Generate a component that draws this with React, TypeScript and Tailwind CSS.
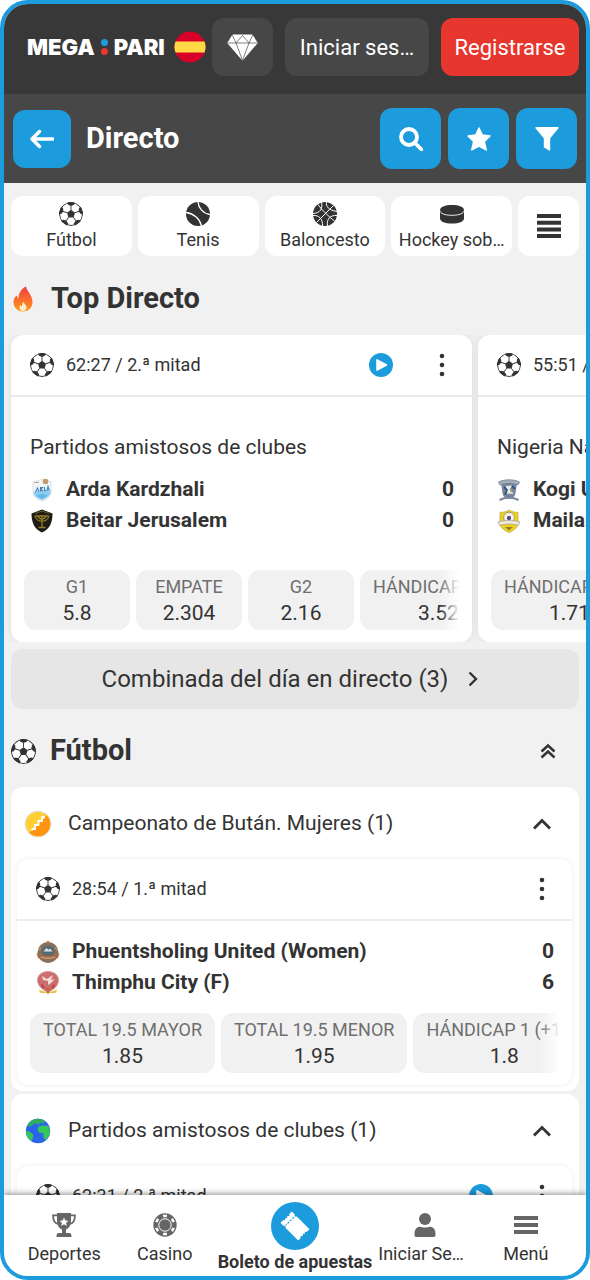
import React from "react";

type Crest = "arda" | "beitar" | "kogi" | "mailantarki" | "phuentsholing" | "thimphu";

interface Team {
  name: string;
  crest: Crest;
  score?: number;
}

interface Odd {
  label: string;
  value: string;
}

interface Match {
  time: string;
  league?: string;
  live?: boolean;
  teams: Team[];
  odds: Odd[];
}

const topMatches: Match[] = [
  {
    time: "62:27 / 2.ª mitad",
    league: "Partidos amistosos de clubes",
    live: true,
    teams: [
      { name: "Arda Kardzhali", crest: "arda", score: 0 },
      { name: "Beitar Jerusalem", crest: "beitar", score: 0 },
    ],
    odds: [
      { label: "G1", value: "5.8" },
      { label: "EMPATE", value: "2.304" },
      { label: "G2", value: "2.16" },
      { label: "HÁNDICAP 1 (0)", value: "3.52" },
    ],
  },
  {
    time: "55:51 / 2.ª mitad",
    league: "Nigeria National League",
    teams: [
      { name: "Kogi United", crest: "kogi" },
      { name: "Mailantarki Care", crest: "mailantarki" },
    ],
    odds: [{ label: "HÁNDICAP 1 (0)", value: "1.71" }],
  },
];

const butanMatch: Match = {
  time: "28:54 / 1.ª mitad",
  teams: [
    { name: "Phuentsholing United (Women)", crest: "phuentsholing", score: 0 },
    { name: "Thimphu City (F)", crest: "thimphu", score: 6 },
  ],
  odds: [
    { label: "TOTAL 19.5 MAYOR", value: "1.85" },
    { label: "TOTAL 19.5 MENOR", value: "1.95" },
    { label: "HÁNDICAP 1 (+1.5)", value: "1.8" },
  ],
};

const friendlyMatch: Match = {
  time: "62:31 / 2.ª mitad",
  live: true,
  teams: [],
  odds: [],
};

/* ---------- icons ---------- */

function SoccerBall({ className = "size-6" }: { className?: string }) {
  return (
    <svg viewBox="0 0 24 24" className={`${className} shrink-0 overflow-hidden rounded-full`} aria-hidden="true">
      <circle cx="12" cy="12" r="11.5" fill="#fff" />
      <path d="M12 7.8 16 10.7 14.5 15.4H9.5L8 10.7Z" fill="#333" />
      {[0, 72, 144, 216, 288].map((a) => (
        <g key={a} transform={`rotate(${a} 12 12)`}>
          <path d="M12 8V3.500" stroke="#333" strokeWidth="0.9" />
          <path d="M12 3.900 9 2.700 7.800 0H16.200L15 2.700Z" fill="#333" />
        </g>
      ))}
      <circle cx="12" cy="12" r="11.5" fill="none" stroke="#333" strokeWidth="1" />
    </svg>
  );
}

function TennisBall() {
  return (
    <svg viewBox="0 0 24 24" className="size-6 shrink-0" aria-hidden="true">
      <circle cx="12" cy="12" r="12" fill="#333" />
      <path d="M12 0C12.5 6 17 11.5 24 12.5M0 10.5C8 11.5 14 17 15.5 24" fill="none" stroke="#fff" strokeWidth="1.3" />
    </svg>
  );
}

function Basketball() {
  return (
    <svg viewBox="0 0 24 24" className="size-6 shrink-0" aria-hidden="true">
      <circle cx="12" cy="12" r="12" fill="#333" />
      <path
        d="M20.5 3.5 3.5 20.5M5 2.5C8 7 15 14 21.5 19M13.5 0C13 4.5 15 8 24 9.5M0 13.5C6 13 10 17 9.5 24M8.5 0C10 7 7 11 0 11.5M24 13.5C17 13 13.5 17 14.5 24"
        fill="none"
        stroke="#fff"
        strokeWidth="1"
      />
    </svg>
  );
}

function Puck() {
  return (
    <svg viewBox="0 0 24 24" className="size-6 shrink-0" aria-hidden="true">
      <path d="M0 8C0 5 5 3 12 3S24 5 24 8V16.500C24 19.500 19 21.500 12 21.500S0 19.500 0 16.500Z" fill="#333" />
      <path d="M0 8.500C0 11.500 5 13.300 12 13.300S24 11.500 24 8.500" fill="none" stroke="#fff" strokeWidth="0.9" />
    </svg>
  );
}

function Flame() {
  return (
    <svg viewBox="0 0 20 26" className="h-[26px] w-5" aria-hidden="true">
      <defs>
        <linearGradient id="flame" x1="0" y1="0" x2="0" y2="1">
          <stop offset="0" stopColor="#ee3f3f" />
          <stop offset="0.5" stopColor="#fb6a2c" />
          <stop offset="1" stopColor="#ff9a1c" />
        </linearGradient>
      </defs>
      <path
        d="M13 0.500C13.500 5 19.500 9 19.500 16C19.500 21.500 15.500 25.500 10 25.500S0.500 21.500 0.500 16C0.500 13 2 10.500 4 9.500C4 11 4.500 12 5.500 12.500C5.500 7 8.500 2.500 13 0.500Z"
        fill="url(#flame)"
      />
      <path d="M10.500 16C11 18 14 19 13.500 22C13.200 24 12 25 10 25S6.500 23.800 6.500 21.800C6.500 20.500 7 19.500 7.700 19C8 20 8.500 20.300 9 20.300C8.700 18.500 9.300 17 10.500 16Z" fill="#ffeccb" />
    </svg>
  );
}

function Diamond() {
  return (
    <svg viewBox="0 0 31 27" className="h-[27px] w-[31px]" aria-hidden="true">
      <path d="M5.500 0.500H25.500L30.800 9 15.500 26.800 0.200 9Z" fill="#fff" />
      <path
        d="M0.500 9H30.500M9 9 15.500 26.500 22 9M9 9 5 0.500M22 9 26 0.500M9 9 15.500 1.500 22 9"
        fill="none"
        stroke="#474747"
        strokeWidth="0.7"
      />
    </svg>
  );
}

function SpainFlag() {
  return (
    <svg viewBox="0 0 32 32" className="size-8 overflow-hidden rounded-full" aria-hidden="true">
      <circle cx="16" cy="16" r="15.500" fill="#d80027" />
      <path d="M1.500 10.500H30.500C32 14 32 18 30.500 21.500H1.500C0 18 0 14 1.500 10.500Z" fill="#ffda44" />
    </svg>
  );
}

function PlayIcon() {
  return (
    <svg viewBox="0 0 24 24" className="size-6" aria-hidden="true">
      <circle cx="12" cy="12" r="12" fill="#1c9cdc" />
      <path d="M8 6.800 17.500 12 8 17.200Z" fill="#fff" stroke="#fff" strokeWidth="1.500" strokeLinejoin="round" />
    </svg>
  );
}

function DotsIcon() {
  return (
    <svg viewBox="0 0 6 24" className="h-6 w-1.5" aria-hidden="true">
      <circle cx="3" cy="3" r="2.300" fill="#333" />
      <circle cx="3" cy="12" r="2.300" fill="#333" />
      <circle cx="3" cy="21" r="2.300" fill="#333" />
    </svg>
  );
}

function ChevronUp() {
  return (
    <svg viewBox="0 0 20 12" className="h-3 w-5" aria-hidden="true">
      <path d="M2 10.500 10 2.500 18 10.500" fill="none" stroke="#333" strokeWidth="2.800" />
    </svg>
  );
}

function SearchIcon() {
  return (
    <svg viewBox="0 0 24 24" className="size-6" aria-hidden="true">
      <circle cx="10" cy="10" r="8" fill="none" stroke="#fff" strokeWidth="3.800" />
      <path d="M15.500 15.500 22.500 22.500" stroke="#fff" strokeWidth="3.800" strokeLinecap="round" />
    </svg>
  );
}

function StarIcon() {
  return (
    <svg viewBox="0 0 24 24" className="size-6" aria-hidden="true">
      <path
        d="M12 1 15.300 8 23 9 17.300 14.400 19.200 22.900 12 19 4.800 22.900 6.700 14.400 1 9 8.700 8Z"
        fill="#fff"
        stroke="#fff"
        strokeWidth="1.500"
        strokeLinejoin="round"
      />
    </svg>
  );
}

function FunnelIcon() {
  return (
    <svg viewBox="0 0 24 24" className="size-6" aria-hidden="true">
      <path d="M1 0.800H23L14.500 11V23L9.500 20V11Z" fill="#fff" stroke="#fff" strokeWidth="1.400" strokeLinejoin="round" />
    </svg>
  );
}

function BackIcon() {
  return (
    <svg viewBox="0 0 24 20" className="h-5 w-6" aria-hidden="true">
      <path d="M23 10H2M9.500 2.500 2 10 9.500 17.500" fill="none" stroke="#fff" strokeWidth="3.400" strokeLinecap="round" strokeLinejoin="round" />
    </svg>
  );
}

function TrophyIcon() {
  return (
    <svg viewBox="0 0 24 24" className="size-6" aria-hidden="true">
      <path d="M5 0H19V8C19 12.500 16.500 15.500 14 16.500V20H17.500C18.800 20 19.500 21 19.500 24H4.500C4.500 21 5.200 20 6.500 20H10V16.500C7.500 15.500 5 12.500 5 8Z" fill="#666" />
      <path d="M5.500 2.300H1C1 7 2.800 10.500 6.500 11M18.500 2.300H23C23 7 21.200 10.500 17.500 11" fill="none" stroke="#666" strokeWidth="1.700" />
      <path d="M12 4.500 13.300 7.600 16.500 7.800 14 9.900 14.800 13 12 11.300 9.200 13 10 9.900 7.500 7.800 10.700 7.600Z" fill="#fff" />
    </svg>
  );
}

function ChipIcon() {
  return (
    <svg viewBox="0 0 24 24" className="size-6" aria-hidden="true">
      <circle cx="12" cy="12" r="11.700" fill="#666" />
      <circle cx="12" cy="12" r="6.200" fill="none" stroke="#fff" strokeWidth="1" />
      {[0, 60, 120, 180, 240, 300].map((a) => (
        <path key={a} d="M9.900 1.700H14.100L13.700 4.200H10.300Z" fill="#fff" transform={`rotate(${a} 12 12)`} />
      ))}
    </svg>
  );
}

function TicketIcon() {
  return (
    <svg viewBox="0 0 32 32" className="size-8" aria-hidden="true">
      <g transform="rotate(45 16 16)">
        <path
          d="M3.500 8H7.500L9 9.500 10.500 8H28.500V11.500L27 13 28.500 14.500 27 16 28.500 17.500 27 19 28.500 20.500V24H10.500L9 22.500 7.500 24H3.500V20.500L5 19 3.500 17.500 5 16 3.500 14.500 5 13 3.500 11.500Z"
          fill="#fff"
        />
        <path d="M9 10.500V22" stroke="#1c9cdc" strokeWidth="1.100" strokeDasharray="2.200 1.200" />
      </g>
    </svg>
  );
}

function UserIcon() {
  return (
    <svg viewBox="0 0 24 24" className="size-6" aria-hidden="true">
      <circle cx="12" cy="6" r="6" fill="#666" />
      <path d="M1.500 20.500C1.500 16.500 4 13.800 7 13.800C9 14.800 15 14.800 17 13.800C20 13.800 22.500 16.500 22.500 20.500V22.300C22.500 23.300 21.800 24 20.800 24H3.200C2.200 24 1.500 23.300 1.500 22.300Z" fill="#666" />
    </svg>
  );
}

function MenuIcon() {
  return (
    <svg viewBox="0 0 24 24" className="size-6" aria-hidden="true">
      <path d="M0 5H24M0 12H24M0 19H24" stroke="#666" strokeWidth="4" />
    </svg>
  );
}

function ButanIcon() {
  return (
    <svg viewBox="0 0 28 28" className="size-7" aria-hidden="true">
      <circle cx="14" cy="14" r="13.500" fill="#e4e4e4" />
      <circle cx="14" cy="14" r="12.300" fill="#ffcf33" />
      <path d="M22.700 5.300A12.300 12.300 0 0 1 5.300 22.700Z" fill="#ff9410" />
      <path d="M20 7H18V11H14.500V15H11V19H8.500" fill="none" stroke="#fff" strokeWidth="2" strokeLinejoin="round" strokeLinecap="round" />
      <path d="M18.500 6.500 20.500 8.500M7.500 20.500 9.500 18.500" stroke="#fff" strokeWidth="1.500" />
    </svg>
  );
}

function GlobeIcon() {
  return (
    <svg viewBox="0 0 28 28" className="size-7" aria-hidden="true">
      <circle cx="14" cy="14" r="12.200" fill="#2b63ea" />
      <path d="M8 3.300C12 1 18 1.300 21 4L19.500 6.500 16 5.500 14.500 8 11 6 8 8.500 5 10 3.500 9C4.500 6.500 6 4.500 8 3.300Z" fill="#2fae60" />
      <path d="M14.500 9.500 19 8.500 24.500 9C26.500 13 26.500 17 24 20L21.500 23 19.500 21 19.500 16.500 15 15.500 13.500 12.500Z" fill="#35c759" />
      <path d="M2 14 5.500 14.500 9.500 18 8.500 22 7.500 24C4 22 2 18.500 2 14Z" fill="#35c759" />
    </svg>
  );
}

const SHIELD = "M12 1C14.500 2.800 18 3.500 21 3.300V14C21 19 16.500 21.500 12 23.500C7.500 21.500 3 19 3 14V3.300C6 3.500 9.500 2.800 12 1Z";

function TeamCrest({ crest }: { crest: Crest }) {
  return (
    <svg viewBox="0 0 24 24" className="size-6 shrink-0" aria-hidden="true">
      {crest === "arda" && (
        <g>
          <path d={SHIELD} fill="#eef6fa" stroke="#d5dde2" strokeWidth="0.800" />
          <path d="M3.500 14C8 12.500 16 12.500 20.500 11V14C20.500 18 16 20.500 12 22C8 20.500 3.500 18 3.500 14Z" fill="#8ccdf0" />
          <path d="M5.500 14 7.500 10 9 13.500M10.500 13.500V9.500H12.500L11 11.500 13 13M14.500 9V12.500H16M17 12.500 18 8.500 19 12" fill="none" stroke="#3f7fb8" strokeWidth="1.100" />
          <path d="M6 17.500 12 16 18 17.500 12 21Z" fill="#5db9e8" />
          <circle cx="15.500" cy="3.500" r="2.800" fill="#c39a68" />
          <path d="M4.500 4.500H9" stroke="#d3938a" strokeWidth="1" />
        </g>
      )}
      {crest === "beitar" && (
        <g>
          <path d="M12 0.500 22.500 4.500C22.500 13 20 20 12 23.500C4 20 1.500 13 1.500 4.500Z" fill="#1f1c14" />
          <path d="M5 6.500C6 14 18 14 19 6.500M8 7C9 11 15 11 16 7M12 6V18M8.500 18.500H15.500M6 7H18" fill="none" stroke="#8f7d2b" strokeWidth="1.300" />
          <path d="M5 4.500 12 2 19 4.500" fill="none" stroke="#6b5e28" strokeWidth="1" />
        </g>
      )}
      {crest === "kogi" && (
        <g>
          <path d="M4 5H20L18.500 15C18.500 18.500 15 20 12 21C9 20 5.500 18.500 5.500 15Z" fill="#77869a" />
          <path d="M1.500 4C7 1 17 1 22.500 4L21 7C16 5 8 5 3 7Z" fill="#a3acb7" stroke="#69778b" strokeWidth="0.700" />
          <path d="M9 8 15 7.500 13 11 16.500 16 10 15.500Z" fill="#e6ebe6" />
          <path d="M7 9 10 12 8 16.500M15 8 18 11" fill="none" stroke="#234a80" strokeWidth="1.600" />
          <path d="M2.500 22C8 19 16 19 21.500 22" fill="none" stroke="#7c899a" strokeWidth="2" />
          <path d="M13 12 15 14" stroke="#a9a866" strokeWidth="1.500" />
        </g>
      )}
      {crest === "mailantarki" && (
        <g>
          <path d={SHIELD} fill="#e9d222" stroke="#b7a943" strokeWidth="0.700" />
          <circle cx="12" cy="8.500" r="5.300" fill="#f5f3ed" stroke="#8c8060" strokeWidth="0.700" />
          <path d="M10.500 7H13.500L14.200 10 12 11.500 9.800 10Z" fill="#504b78" />
          <path d="M1 13C8 11 16 11 23 13L21.500 16.500C16 14.500 8 14.500 2.500 16.500Z" fill="#eee9d8" stroke="#9a8fa0" strokeWidth="0.600" />
          <path d="M8 18 12 21.500 16 18Z" fill="#957c35" />
        </g>
      )}
      {crest === "phuentsholing" && (
        <g>
          <circle cx="12" cy="12.500" r="10.500" fill="#8a705b" />
          <path d="M9 3 12 0.500 15 3Z" fill="#b08a4a" />
          <ellipse cx="12" cy="11" rx="6.500" ry="5.500" fill="#566a72" />
          <path d="M7.500 11.500 10.500 8 12.500 10 14 8.500 16.500 11.500Z" fill="#dce1df" />
          <path d="M0.500 13C5 16.500 19 16.500 23.500 13L22 18C17 20 7 20 2 18Z" fill="#a5694a" />
          <path d="M5 17.200C9 18.500 15 18.500 19 17.200M2.500 10 5 8M21.500 10 19 8" fill="none" stroke="#d3b083" strokeWidth="1" />
        </g>
      )}
      {crest === "thimphu" && (
        <g>
          <path d="M12 0.500C18 0.500 22.500 4 22.500 9C22.500 15 17.500 19 12 21C6.500 19 1.500 15 1.500 9C1.500 4 6 0.500 12 0.500Z" fill="#cb6d6d" stroke="#d8a29a" strokeWidth="1" />
          <path d="M6 5 11 8 17 4 15 9 19 8 15 12 12 14 12 10 7 9Z" fill="#f3dcd9" />
          <path d="M5.500 13.500 8 17M18.500 13.500 16 17" stroke="#b43d40" strokeWidth="1.500" />
          <path d="M2.500 18.500 8 20.500H16L21.500 18.500 19.500 22 12 22 4.500 22Z" fill="#e7bf45" />
          <path d="M9 17H15L12 23.500Z" fill="#ca6255" />
        </g>
      )}
    </svg>
  );
}

/* ---------- parts ---------- */

function MatchBar({ match }: { match: Match }) {
  return (
    <div className="flex h-[62px] items-center border-b-2 border-[#ebebeb] pl-[19px]">
      <SoccerBall />
      <span className="ml-3 flex-1 truncate text-lg">{match.time}</span>
      {match.live && (
        <button type="button" aria-label="Ver transmisión" className="flex h-full w-[62px] items-center justify-center">
          <PlayIcon />
        </button>
      )}
      <button type="button" aria-label="Más opciones" className="flex h-full w-[60px] items-center justify-center">
        <DotsIcon />
      </button>
    </div>
  );
}

function TeamRows({ teams }: { teams: Team[] }) {
  return (
    <ul className="pr-[18px] pl-[19px] text-[21px] leading-[31px] font-bold">
      {teams.map((team) => (
        <li key={team.name} className="flex items-center">
          <TeamCrest crest={team.crest} />
          <span className="ml-3 flex-1 truncate">{team.name}</span>
          {team.score !== undefined && <span>{team.score}</span>}
        </li>
      ))}
    </ul>
  );
}

function OddsRow({ odds }: { odds: Odd[] }) {
  return (
    <div className="relative mr-3 ml-[13px] flex gap-1.5 overflow-hidden">
      {odds.map((odd) => (
        <button
          key={odd.label}
          type="button"
          className="h-[60px] min-w-[106px] shrink-0 rounded-xl bg-[#f1f1f1] px-[13px] text-center whitespace-nowrap"
        >
          <span className="block text-lg leading-[26px] text-[#6f6f6f]">{odd.label}</span>
          <span className="block text-[21px] leading-[26px]">{odd.value}</span>
        </button>
      ))}
      <div className="pointer-events-none absolute inset-y-0 right-0 w-5 bg-linear-to-r from-white/0 to-white" />
    </div>
  );
}

function TopCard({ match }: { match: Match }) {
  return (
    <article className="w-[461px] shrink-0 rounded-xl bg-white pb-3 shadow-[0_0_8px_rgba(0,0,0,0.08)]">
      <MatchBar match={match} />
      <p className="mt-9 mb-[13px] truncate px-[19px] text-[21px] leading-7">{match.league}</p>
      <TeamRows teams={match.teams} />
      <div className="mt-[34px]">
        <OddsRow odds={match.odds} />
      </div>
    </article>
  );
}

function League({ icon, title, match }: { icon: React.ReactNode; title: string; match: Match }) {
  return (
    <section className="rounded-xl bg-white pr-[7px] pb-1.5 pl-1.5">
      <button type="button" className="flex h-[72px] w-full items-center pt-0.5 pr-5 pl-[7px] text-left">
        {icon}
        <span className="ml-4 flex-1 truncate text-[21px]">{title}</span>
        <ChevronUp />
      </button>
      <article className="rounded-xl bg-white pb-3 shadow-[0_0_6px_rgba(0,0,0,0.08)]">
        <MatchBar match={match} />
        <div className="py-[15px]">
          <TeamRows teams={match.teams} />
        </div>
        {match.odds.length > 0 && <OddsRow odds={match.odds} />}
      </article>
    </section>
  );
}

const sports = [
  { name: "Fútbol", icon: <SoccerBall /> },
  { name: "Tenis", icon: <TennisBall /> },
  { name: "Baloncesto", icon: <Basketball /> },
  { name: "Hockey sob…", icon: <Puck /> },
];

function NavItem({ icon, label }: { icon: React.ReactNode; label: string }) {
  return (
    <a href="#" className="flex flex-1 flex-col items-center pt-[18px] text-lg leading-6 whitespace-nowrap">
      {icon}
      <span className="mt-[5px]">{label}</span>
    </a>
  );
}

export default function App() {
  return (
    <div className="flex h-screen flex-col overflow-hidden rounded-[28px] border-4 border-[#1c9cdc] bg-[#f1f1f1] font-[Roboto,sans-serif] text-[#333]">
      <header className="shrink-0 text-white">
        <div className="flex h-[90px] items-center bg-[#383838] pr-[7px] pb-1 pl-[23px]">
          <a href="#" aria-label="Megapari" className="flex items-center font-[Inter,sans-serif] text-[22px] font-black">
            <span>MEGA</span>
            <span className="mx-1.5 flex flex-col gap-0.5">
              <span className="size-[7px] rounded-full bg-[#1c9cdc]" />
              <span className="size-[7px] rounded-full bg-[#e63830]" />
            </span>
            <span>PARI</span>
          </a>
          <button type="button" aria-label="España" className="ml-auto">
            <SpainFlag />
          </button>
          <button type="button" aria-label="Promociones" className="ml-1.5 flex h-[58px] w-[61px] items-center justify-center rounded-xl bg-[#474747]">
            <Diamond />
          </button>
          <button type="button" className="ml-3 h-[58px] w-36 rounded-xl bg-[#474747] text-[22px]">
            Iniciar ses…
          </button>
          <button type="button" className="ml-3 h-[58px] w-[138px] rounded-xl bg-[#e6362e] text-[22px]">
            Registrarse
          </button>
        </div>
        <div className="flex h-[89px] items-center gap-[7px] bg-[#474747] pr-[9px] pl-[9px]">
          <button type="button" aria-label="Volver" className="flex size-[58px] items-center justify-center rounded-xl bg-[#1c9cdc]">
            <BackIcon />
          </button>
          <h1 className="ml-2 flex-1 text-[29px] font-bold">Directo</h1>
          <button type="button" aria-label="Buscar" className="flex size-[61px] items-center justify-center rounded-xl bg-[#1c9cdc]">
            <SearchIcon />
          </button>
          <button type="button" aria-label="Favoritos" className="flex size-[61px] items-center justify-center rounded-xl bg-[#1c9cdc]">
            <StarIcon />
          </button>
          <button type="button" aria-label="Filtrar" className="flex size-[61px] items-center justify-center rounded-xl bg-[#1c9cdc]">
            <FunnelIcon />
          </button>
        </div>
      </header>

      <main className="min-h-0 flex-1 overflow-y-auto pt-[13px] [scrollbar-width:none]">
        <div className="flex gap-1.5 px-[7px]">
          {sports.map((sport) => (
            <button
              key={sport.name}
              type="button"
              className="flex h-[60px] min-w-0 flex-1 flex-col items-center rounded-xl bg-white pt-1.5 text-lg leading-7 whitespace-nowrap"
            >
              {sport.icon}
              {sport.name}
            </button>
          ))}
          <button type="button" aria-label="Todos los deportes" className="flex h-[60px] w-[61px] items-center justify-center rounded-xl bg-white">
            <svg viewBox="0 0 24 26" className="h-[26px] w-6" aria-hidden="true">
              <path d="M0 3H24M0 9.700H24M0 16.400H24M0 23H24" stroke="#333" strokeWidth="4" />
            </svg>
          </button>
        </div>

        <div className="flex h-[79px] items-center gap-[18px] pt-1.5 pl-[9px]">
          <Flame />
          <h2 className="text-[29px] font-bold">Top Directo</h2>
        </div>
        <div className="flex gap-1.5 overflow-x-auto px-[7px] [scrollbar-width:none]">
          {topMatches.map((match) => (
            <TopCard key={match.time} match={match} />
          ))}
        </div>

        <div className="px-[7px]">
          <button type="button" className="mt-[7px] flex h-[60px] w-full items-center justify-center gap-5 rounded-xl bg-[#e6e6e6] pr-2.5 text-2xl">
            Combinada del día en directo (3)
            <svg viewBox="0 0 10 16" className="h-4 w-2.5" aria-hidden="true">
              <path d="M1.500 1.500 8 8 1.500 14.500" fill="none" stroke="#333" strokeWidth="2.400" />
            </svg>
          </button>
        </div>

        <div className="flex h-[78px] items-center pt-1.5 pr-[30px] pl-[7px]">
          <SoccerBall className="size-[25px]" />
          <h2 className="ml-3.5 flex-1 text-[29px] font-bold">Fútbol</h2>
          <button type="button" aria-label="Contraer todo">
            <svg viewBox="0 0 16 16" className="size-4" aria-hidden="true">
              <path d="M1.500 8.500 8 2.500 14.500 8.500M1.500 14.500 8 8.500 14.500 14.500" fill="none" stroke="#333" strokeWidth="2.500" />
            </svg>
          </button>
        </div>

        <div className="flex flex-col gap-[3px] px-[7px]">
          <League icon={<ButanIcon />} title="Campeonato de Bután. Mujeres (1)" match={butanMatch} />
          <League icon={<GlobeIcon />} title="Partidos amistosos de clubes (1)" match={friendlyMatch} />
        </div>
      </main>

      <nav className="relative z-10 flex h-[81px] shrink-0 bg-white px-2.5 shadow-[0_-1px_6px_rgba(0,0,0,0.45)]">
        <NavItem icon={<TrophyIcon />} label="Deportes" />
        <NavItem icon={<ChipIcon />} label="Casino" />
        <a href="#" className="flex w-40 shrink-0 flex-col items-center pt-[7px] text-lg leading-6 font-bold whitespace-nowrap">
          <span className="flex size-12 shrink-0 items-center justify-center rounded-full bg-[#1c9cdc]">
            <TicketIcon />
          </span>
          <span>Boleto de apuestas</span>
        </a>
        <a href="#" className="flex flex-1 flex-col items-center pt-[18px] text-lg leading-6 whitespace-nowrap">
          <UserIcon />
          <span className="mt-[5px] w-[94px]">Iniciar Se…</span>
        </a>
        <NavItem icon={<MenuIcon />} label="Menú" />
      </nav>
    </div>
  );
}
